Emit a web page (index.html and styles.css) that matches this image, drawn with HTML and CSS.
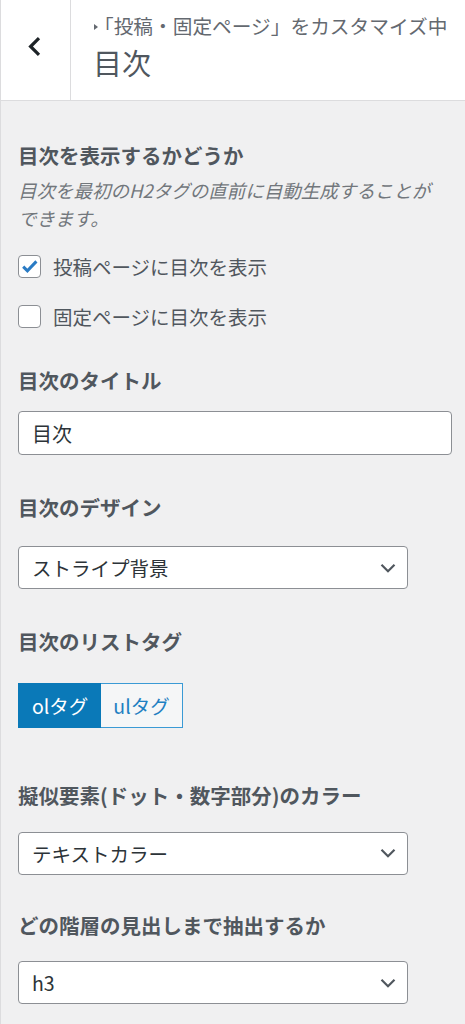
FILE: index.html
```html
<!DOCTYPE html>
<html lang="ja">
<head>
<meta charset="utf-8">
<title>目次</title>
<link rel="stylesheet" href="styles.css">
</head>
<body>
<div class="panel">
  <header class="head">
    <div class="back">
      <svg class="back-icon" width="16" height="22" viewBox="0 0 16 22"><polyline points="12,3.2 3.6,11.5 12,19.8" fill="none" stroke="#1d2327" stroke-width="3.2"/></svg>
    </div>
    <div class="head-text">
      <div class="crumb"><span class="tri"></span>「投稿・固定ページ」をカスタマイズ中</div>
      <h1 class="title">目次</h1>
    </div>
  </header>

  <main class="controls">
    <section class="control first">
      <h2 class="label">目次を表示するかどうか</h2>
      <p class="desc">目次を最初のH2タグの直前に自動生成することが<br>できます。</p>
      <div class="checks">
        <div class="check">
          <span class="box"><svg width="21" height="21" viewBox="0 0 21 21"><path d="M4.2 10.6 L8.4 14.8 L17.4 5.4" fill="none" stroke="#2a7bc4" stroke-width="3"/></svg></span>
          <span>投稿ページに目次を表示</span>
        </div>
        <div class="check">
          <span class="box"></span>
          <span>固定ページに目次を表示</span>
        </div>
      </div>
    </section>

    <section class="control text">
      <h2 class="label">目次のタイトル</h2>
      <div class="input">目次</div>
    </section>

    <section class="control design">
      <h2 class="label">目次のデザイン</h2>
      <div class="select"><span>ストライプ背景</span><svg class="caret" width="16" height="10" viewBox="0 0 16 10"><path d="M1.5 1.8 L8 8.2 L14.5 1.8" fill="none" stroke="#50575e" stroke-width="2.2"/></svg></div>
    </section>

    <section class="control tags">
      <h2 class="label">目次のリストタグ</h2>
      <div class="btns">
        <span class="btn on">olタグ</span>
        <span class="btn off">ulタグ</span>
      </div>
    </section>

    <section class="control">
      <h2 class="label">擬似要素(ドット・数字部分)のカラー</h2>
      <div class="select"><span>テキストカラー</span><svg class="caret" width="16" height="10" viewBox="0 0 16 10"><path d="M1.5 1.8 L8 8.2 L14.5 1.8" fill="none" stroke="#50575e" stroke-width="2.2"/></svg></div>
    </section>

    <section class="control last">
      <h2 class="label">どの階層の見出しまで抽出するか</h2>
      <div class="select"><span>h3</span><svg class="caret" width="16" height="10" viewBox="0 0 16 10"><path d="M1.5 1.8 L8 8.2 L14.5 1.8" fill="none" stroke="#50575e" stroke-width="2.2"/></svg></div>
    </section>
  </main>
</div>
</body>
</html>
```

FILE: styles.css
```css
* { box-sizing: border-box; }

html, body {
  margin: 0;
  padding: 0;
}

body {
  width: 465px;
  min-height: 1024px;
  background: #f0f0f1;
  font-family: "Noto Sans CJK JP", "Noto Sans", sans-serif;
  overflow: hidden;
}

.panel {
  min-height: 1024px;
  border-left: 1px solid #dcdcde;
}

/* header */
.head {
  display: flex;
  height: 101px;
  background: #fff;
  border-bottom: 1px solid #dcdcde;
}

.back {
  flex: none;
  width: 70px;
  border-right: 1px solid #dcdcde;
  padding: 35px 0 0 26px;
}

.back-icon { display: block; }

.head-text {
  padding: 12px 0 0 22px;
}

.crumb {
  font-size: 19.7px;
  line-height: 27px;
  color: #646970;
  white-space: nowrap;
}

.tri {
  display: inline-block;
  width: 0;
  height: 0;
  border-left: 4px solid #646970;
  border-top: 3px solid transparent;
  border-bottom: 3px solid transparent;
  vertical-align: 4px;
  margin-left: 1px;
  margin-right: -4px;
}

.title {
  margin: 5px 0 0;
  font-size: 29px;
  line-height: 36px;
  font-weight: 400;
  color: #50575e;
}

/* controls */
.controls {
  padding: 40px 13px 40px 17px;
}

.control { margin-top: 38px; }
.control.first { margin-top: 0; }
.control.text { margin-top: 34px; }
.control.last { margin-top: 36px; }
.control.tags { padding-bottom: 15px; }

.label {
  margin: 0;
  font-size: 20.5px;
  line-height: 28px;
  font-weight: 700;
  color: #50575e;
}

.desc {
  margin: 7px 0 0;
  font-size: 18.5px;
  line-height: 28px;
  font-style: italic;
  color: #72777c;
  white-space: nowrap;
}

.checks {
  display: flex;
  flex-direction: column;
  gap: 18px;
  margin-top: 18px;
}

.check {
  display: flex;
  align-items: center;
  gap: 12px;
  height: 32px;
  font-size: 19.5px;
  color: #50575e;
}

.box {
  flex: none;
  width: 23px;
  height: 23px;
  border: 1px solid #8c8f94;
  border-radius: 4px;
  background: #fff;
}

.box svg { display: block; }

.input {
  margin-top: 17px;
  height: 44px;
  border: 1px solid #8c8f94;
  border-radius: 4px;
  background: #fff;
  padding: 0 13px;
  display: flex;
  align-items: center;
  font-size: 20px;
  color: #2c3338;
}

.select {
  margin-top: 22.5px;
  width: 390px;
  height: 43px;
  border: 1px solid #8c8f94;
  border-radius: 4px;
  background: #fff;
  padding: 0 11px 0 13px;
  display: flex;
  align-items: center;
  justify-content: space-between;
  font-size: 19.5px;
  color: #2c3338;
}

.control.design .select { margin-top: 25px; }

.caret { display: block; flex: none; }

.btns {
  display: flex;
  width: max-content;
  margin-top: 28px;
}

.btn {
  height: 45px;
  padding: 0 12px 0 13px;
  display: flex;
  align-items: center;
  font-size: 19.5px;
}

.btn.on {
  background: #0a79b8;
  border: 1px solid #0a79b8;
  color: #fff;
}

.btn.off {
  background: #f5f6f7;
  border: 1.5px solid #3a9ad5;
  border-left: none;
  color: #1f80c2;
  padding-left: 12px;
}
```
